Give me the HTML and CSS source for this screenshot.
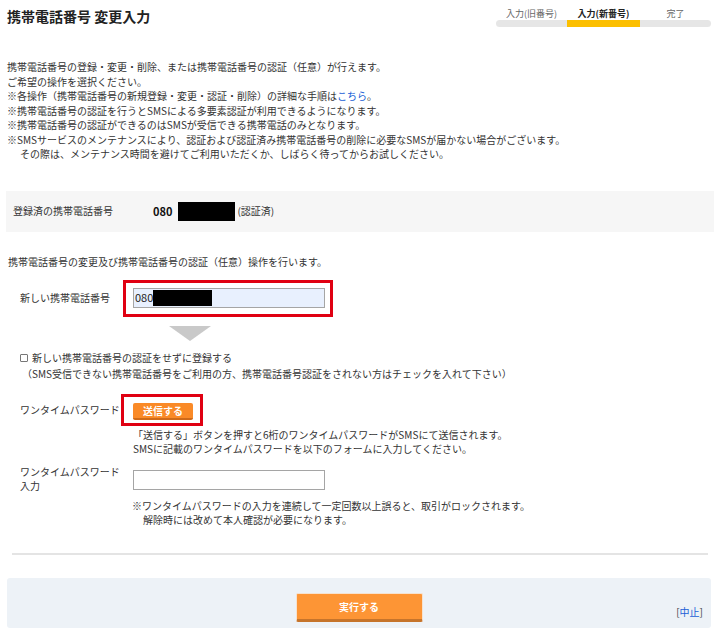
FILE: index.html
```html
<!DOCTYPE html>
<html lang="ja">
<head>
<meta charset="utf-8">
<title>携帯電話番号 変更入力</title>
<link rel="stylesheet" href="styles.css">
</head>
<body>
<header class="top">
  <h1 class="title">携帯電話番号 変更入力</h1>
  <ol class="steps">
    <li class="step"><span class="step-label">入力(旧番号)</span><span class="step-bar"></span></li>
    <li class="step active"><span class="step-label">入力(新番号)</span><span class="step-bar"></span></li>
    <li class="step"><span class="step-label">完了</span><span class="step-bar"></span></li>
  </ol>
</header>

<div class="notice">
  <p>携帯電話番号の登録・変更・削除、または携帯電話番号の認証（任意）が行えます。</p>
  <p>ご希望の操作を選択ください。</p>
  <p>※各操作（携帯電話番号の新規登録・変更・認証・削除）の詳細な手順は<a class="link" href="#">こちら</a>。</p>
  <p>※携帯電話番号の認証を行うとSMSによる多要素認証が利用できるようになります。</p>
  <p>※携帯電話番号の認証ができるのはSMSが受信できる携帯電話のみとなります。</p>
  <p>※SMSサービスのメンテナンスにより、認証および認証済み携帯電話番号の削除に必要なSMSが届かない場合がございます。</p>
  <p class="cont">その際は、メンテナンス時間を避けてご利用いただくか、しばらく待ってからお試しください。</p>
</div>

<div class="registered">
  <span class="reg-label">登録済の携帯電話番号</span>
  <span class="reg-value"><b class="num">080</b><span class="mask mask-reg"></span><span class="reg-status">(認証済)</span></span>
</div>

<p class="lead">携帯電話番号の変更及び携帯電話番号の認証（任意）操作を行います。</p>

<div class="field">
  <span class="label">新しい携帯電話番号</span>
  <div class="hl hl-phone">
    <div class="textbox filled"><span class="num-in">080</span><span class="mask mask-in"></span></div>
  </div>
</div>

<div class="arrow"></div>

<p class="check"><span class="checkbox"></span>新しい携帯電話番号の認証をせずに登録する</p>
<p class="check-note">（SMS受信できない携帯電話番号をご利用の方、携帯電話番号認証をされない方はチェックを入れて下さい）</p>

<div class="field field-send">
  <span class="label">ワンタイムパスワード</span>
  <div class="hl hl-send">
    <button class="btn-send" type="button">送信する</button>
  </div>
</div>
<div class="desc">
  <p>「送信する」ボタンを押すと6桁のワンタイムパスワードがSMSにて送信されます。</p>
  <p>SMSに記載のワンタイムパスワードを以下のフォームに入力してください。</p>
</div>

<div class="field field-otp">
  <span class="label label-otp">ワンタイムパスワード入力</span>
  <div class="textbox otp"></div>
</div>
<div class="notes">
  <p>※ワンタイムパスワードの入力を連続して一定回数以上誤ると、取引がロックされます。</p>
  <p class="notes-cont">解除時には改めて本人確認が必要になります。</p>
</div>

<div class="rule"></div>

<footer class="actions">
  <button class="btn-exec" type="button">実行する</button>
  <span class="cancel">[<a class="link" href="#">中止</a>]</span>
</footer>
</body>
</html>
```

FILE: styles.css
```css
* { box-sizing: border-box; }

body {
  margin: 0;
  width: 720px;
  height: 632px;
  overflow: hidden;
  background: #fff;
  color: #333;
  font-family: "Noto Sans CJK JP", "Noto Sans", sans-serif;
  font-size: 10px;
  line-height: 14.5px;
}

p { margin: 0; }

.link { color: #1b5fd6; text-decoration: none; }

/* header */
.top {
  display: flex;
  justify-content: space-between;
  align-items: flex-start;
  padding: 0 9px 0 7px;
}
.title {
  margin: 0;
  padding-top: 6px;
  font-size: 14px;
  line-height: 20px;
  font-weight: bold;
  color: #222;
}
.steps {
  list-style: none;
  margin: 0;
  padding: 7px 0 0;
  display: grid;
  grid-template-columns: 71px 73px 71px;
}
.step {
  display: flex;
  flex-direction: column;
  align-items: center;
}
.step-label {
  font-size: 9px;
  line-height: 13px;
  color: #666;
}
.step-bar {
  align-self: stretch;
  height: 7px;
  background: #e6e6e6;
}
.step:first-child .step-bar { border-radius: 4px 0 0 4px; }
.step:last-child .step-bar { border-radius: 0 4px 4px 0; }
.step.active .step-label { font-weight: bold; color: #222; }
.step.active .step-bar { background: #fcbf00; }

/* notice */
.notice {
  margin-top: 33px;
  padding: 0 7px;
}
.notice .cont { padding-left: 13px; }

/* registered */
.registered {
  margin: 29px 6px 0 6px;
  height: 41px;
  padding-left: 7px;
  background: #f6f6f6;
  display: grid;
  grid-template-columns: 140px auto;
  justify-content: start;
  align-items: center;
  color: #333;
}
.reg-value {
  display: flex;
  align-items: center;
}
.num {
  font-size: 11px;
  font-weight: bold;
  color: #111;
  margin-right: 6px;
}
.mask { display: inline-block; background: #000; }
.mask-reg { width: 57px; height: 19px; }
.reg-status { margin-left: 2px; }

/* lead */
.lead {
  margin-top: 23.5px;
  padding-left: 8px;
}

/* fields */
.field {
  display: grid;
  grid-template-columns: 103px auto;
  justify-content: start;
  align-items: center;
  padding-left: 20px;
  margin-top: 10px;
}
.label { color: #333; }

.hl { border: 3px solid #e00012; }
.hl-phone {
  width: 210px;
  padding: 5px 5px 6px 7px;
}

.textbox {
  height: 20px;
  border: 1px solid #a5a5a5;
  background: #fff;
  display: flex;
  align-items: center;
  padding-left: 1px;
}
.textbox.filled { background: #e8f0fe; }
.num-in { font-size: 11px; color: #222; }
.mask-in { width: 59px; height: 16px; }

.arrow {
  margin: 9px 0 0 169px;
  width: 0;
  height: 0;
  border-left: 21.5px solid transparent;
  border-right: 21.5px solid transparent;
  border-top: 15px solid #c9c9c9;
}

.check {
  margin-top: 10px;
  padding-left: 20px;
  display: flex;
  align-items: center;
}
.checkbox {
  width: 8px;
  height: 8px;
  border: 1px solid #777;
  border-radius: 1px;
  background: #fff;
  margin-right: 4px;
}
.check-note {
  margin-top: 1.5px;
  padding-left: 22px;
}

.field-send {
  grid-template-columns: 101px auto;
  margin-top: 13px;
}
.hl-send {
  padding: 6px 7px 3px 9px;
}
.btn-send {
  display: block;
  width: 60px;
  height: 17px;
  margin: 0;
  padding: 0;
  border: none;
  border-bottom: 2px solid #cf6a18;
  border-radius: 2px;
  background: #fa8a27;
  color: #fff;
  font-family: inherit;
  font-size: 10px;
  font-weight: bold;
  line-height: 15px;
}

.desc {
  margin-top: 1.5px;
  padding-left: 133px;
}

.field-otp {
  grid-template-columns: 113px auto;
  align-items: start;
  margin-top: 8px;
}
.label-otp { max-width: 104px; }
.textbox.otp {
  width: 192px;
  margin-top: 5px;
}

.notes {
  margin-top: 5px;
  padding-left: 132px;
}
.notes .notes-cont { padding-left: 11px; }

.rule {
  margin: 25px 12px 0 12px;
  height: 2px;
  background: #e4e4e4;
}

/* footer */
.actions {
  margin: 23px 9px 0 7px;
  height: 50px;
  border-radius: 3px;
  background: #edf2f7;
  display: grid;
  grid-template-columns: 1fr 127px 1fr;
}
.btn-exec {
  grid-column: 2;
  align-self: start;
  margin: 15px 0 0;
  width: 127px;
  height: 29px;
  padding: 0;
  border: 1px solid #f6e2cf;
  border-bottom: 3px solid #c6742b;
  border-radius: 2px;
  background: #fd9535;
  color: #fff;
  font-family: inherit;
  font-size: 10px;
  font-weight: bold;
}
.cancel {
  grid-column: 3;
  justify-self: end;
  align-self: end;
  margin: 0 8px 8px 0;
  color: #444;
}
```
